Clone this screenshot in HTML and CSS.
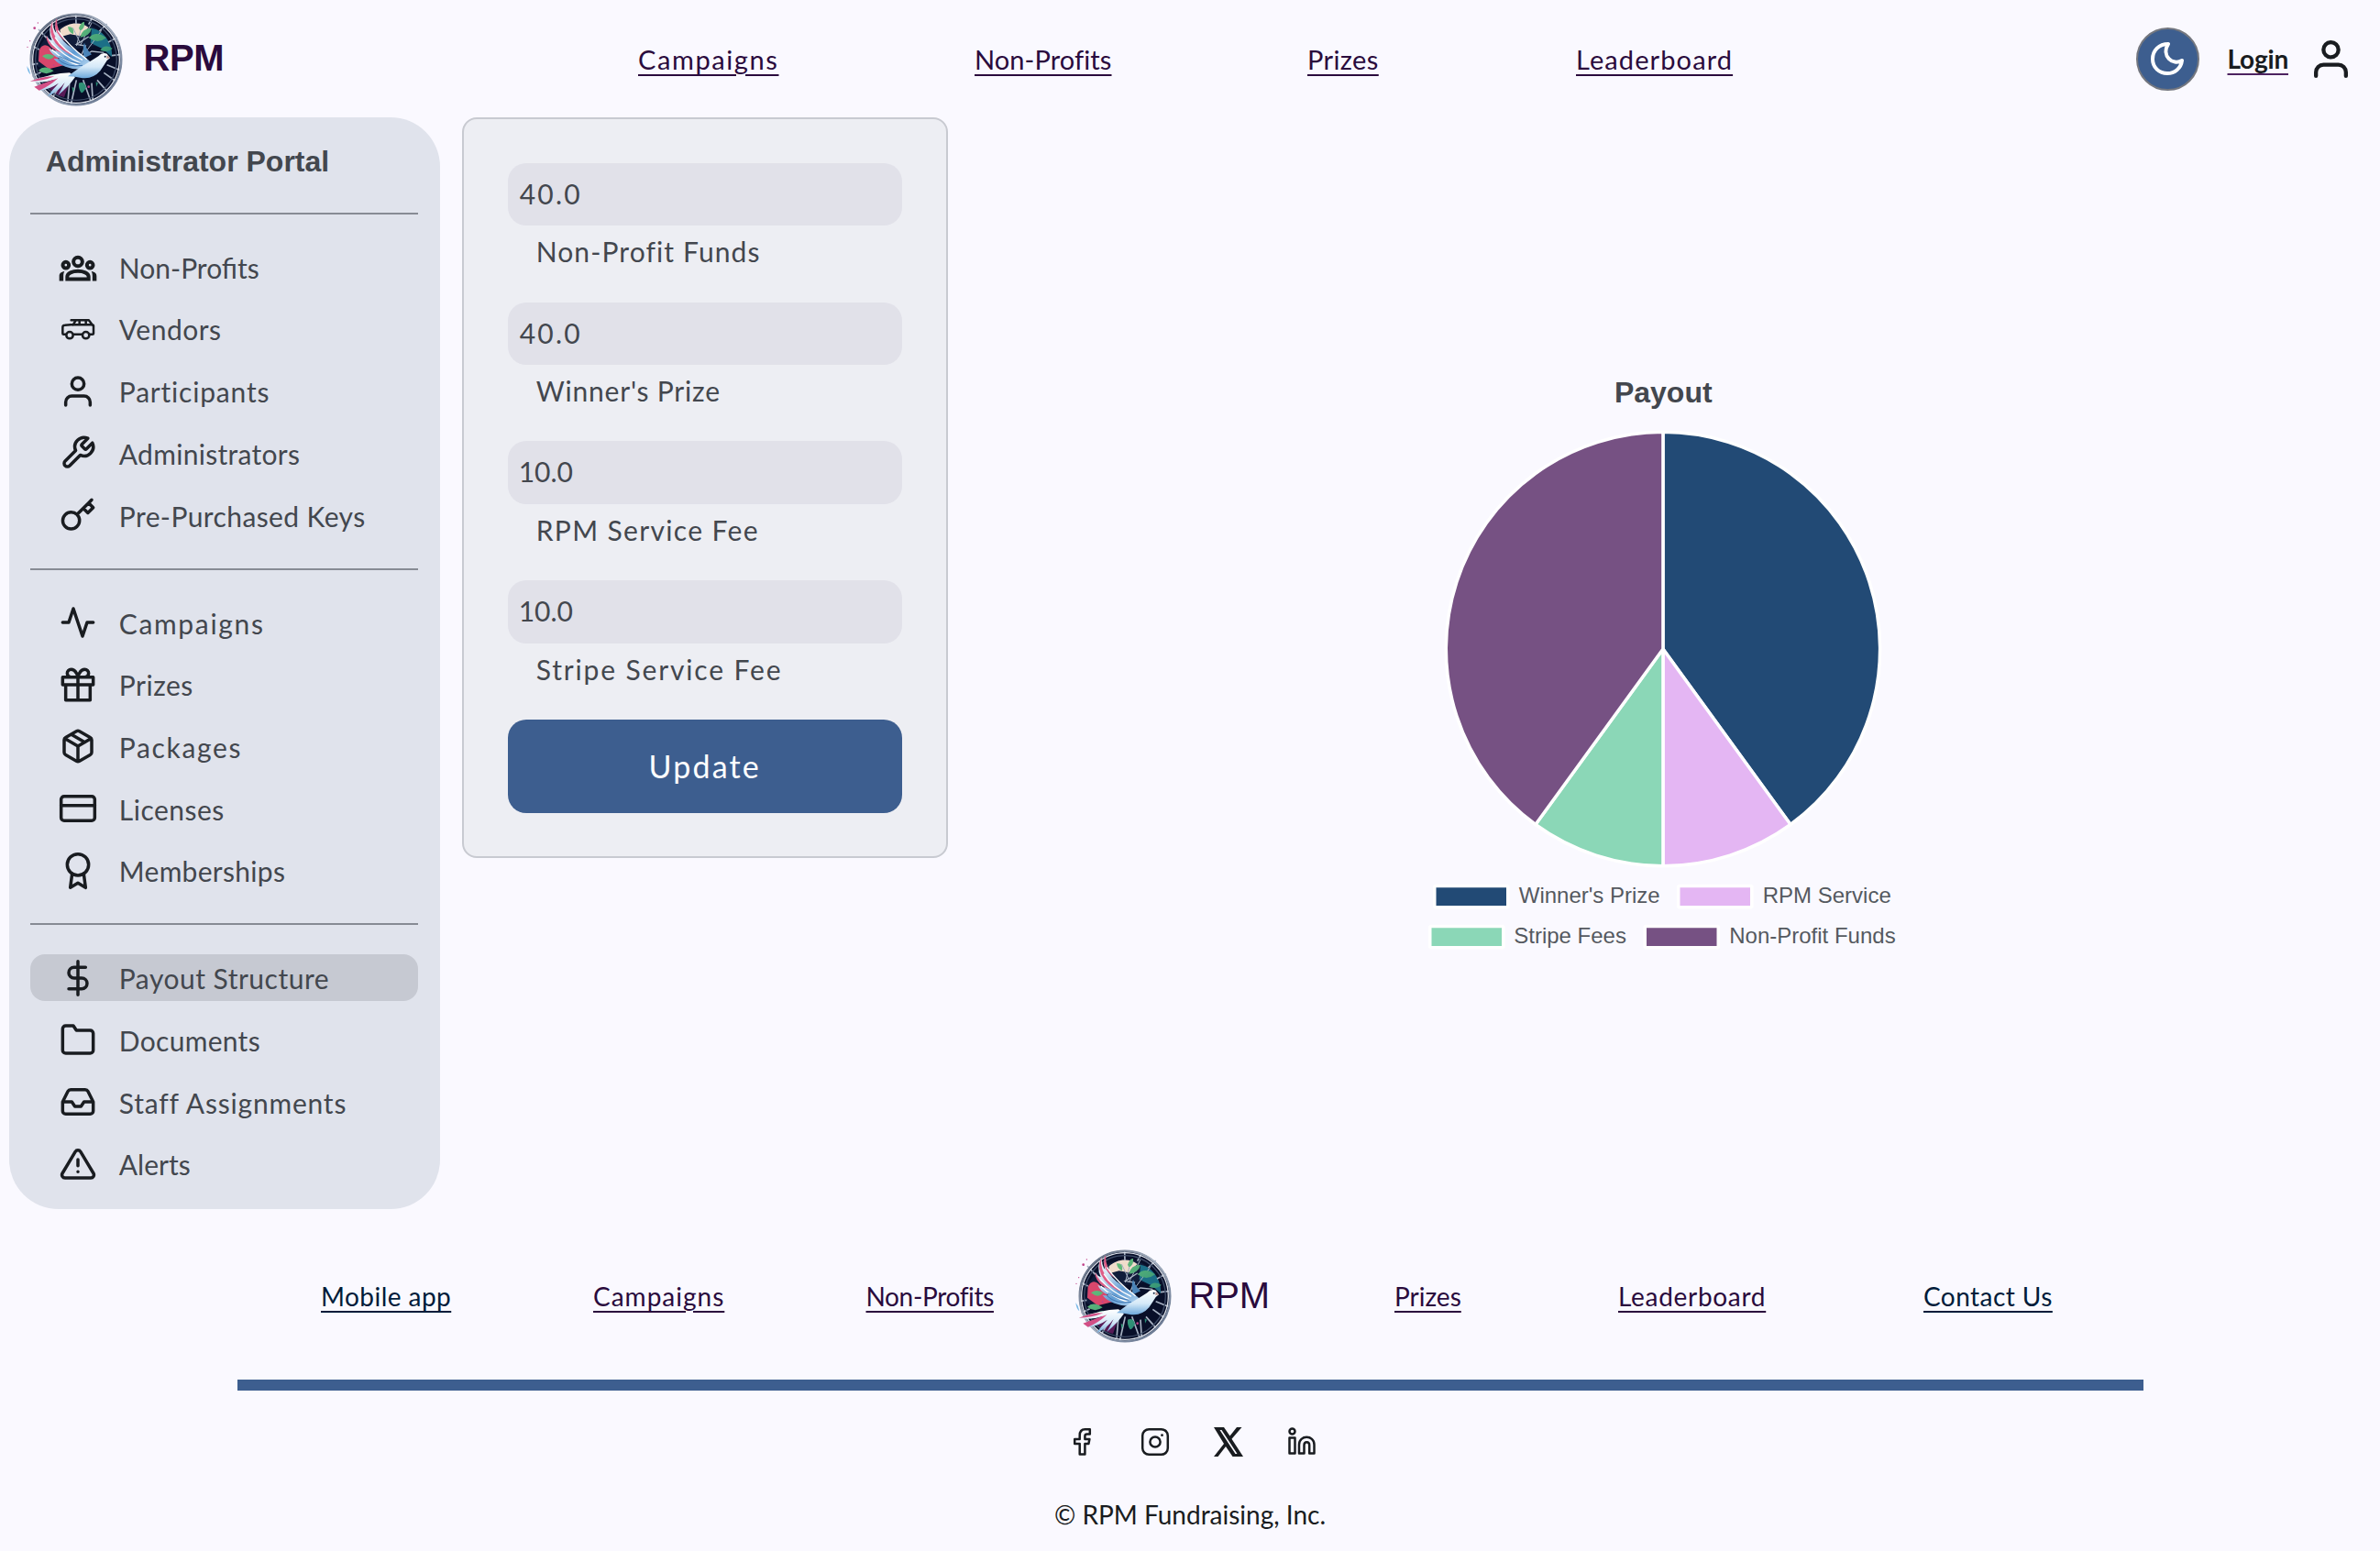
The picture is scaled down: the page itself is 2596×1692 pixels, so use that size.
FILE: index.html
```
<!DOCTYPE html>
<html lang="en">
<head>
<meta charset="utf-8">
<title>RPM - Payout Structure</title>
<link rel="stylesheet" href="styles.css">
</head>
<body>
<svg class="defs" aria-hidden="true">
  <defs>
    <linearGradient id="rim" x1="0" y1="0" x2="1" y2="1"><stop offset="0" stop-color="#4a566c"/><stop offset=".45" stop-color="#a9b4c4"/><stop offset="1" stop-color="#5a6a86"/></linearGradient>
    <linearGradient id="body" x1="0" y1="0" x2="0" y2="1"><stop offset="0" stop-color="#fff"/><stop offset=".55" stop-color="#d5e9f8"/><stop offset="1" stop-color="#6da9dc"/></linearGradient>
    <linearGradient id="wing" x1="0" y1="0" x2=".8" y2="1"><stop offset="0" stop-color="#fff"/><stop offset=".35" stop-color="#d6e6f5"/><stop offset=".7" stop-color="#5f9bd3"/><stop offset="1" stop-color="#a9cdec"/></linearGradient>
    <linearGradient id="leaf" x1="0" y1="0" x2="1" y2="1"><stop offset="0" stop-color="#7ed07c"/><stop offset="1" stop-color="#167c74"/></linearGradient>
    <clipPath id="disc"><circle cx="249" cy="195" r="146"/></clipPath>
    <symbol id="logo" viewBox="84 36 324 318">
      <circle cx="249" cy="195" r="150" fill="#080f29"/>
      <g clip-path="url(#disc)">
        <path d="M125 165C150 110 190 78 260 74C320 80 352 120 368 170L310 150L250 160L190 190L150 232L120 215Z" fill="#101c3a"/>
        <path d="M196 98C220 74 262 68 290 90L262 118L230 112L200 120Z" fill="#f0dccb"/>
        <path d="M128 165C140 138 160 140 190 190L208 214L160 226L126 200Z" fill="#d9476c"/>
        <path d="M300 92C345 100 370 150 366 186L336 160L296 140Z" fill="#1c6f87"/>
        <path d="M165 262L235 250L210 318C180 312 160 290 150 276Z" fill="#571a56"/>
        <path d="M290 120L250 145L280 150L262 190L300 168L340 172" fill="none" stroke="#aab5c4" stroke-width="4"/>
      </g>
      <g stroke="#a7b2c3" stroke-width="5" fill="none">
        <path d="M249 78L248 48M290 80L304 54M325 102L350 78M354 138L384 122M366 182L398 178M350 212L394 230M340 238L376 264M318 262L350 298M300 272L304 336M272 262L298 334M250 262L232 342M228 262L222 332M206 262L174 316M134 236L106 250M124 208L100 212M128 162L104 150M152 124L126 96"/>
        <path d="M300 75L262 150M332 100L282 168M238 90L262 140M270 76L250 150" stroke-width="3"/>
      </g>
      <circle cx="249" cy="195" r="133" fill="none" stroke="#3e4b66" stroke-width="4"/>
      <circle cx="249" cy="195" r="142" fill="none" stroke="#d9dee7" stroke-width="4"/>
      <circle cx="249" cy="195" r="148" fill="none" stroke="url(#rim)" stroke-width="7"/>
      <g fill="url(#leaf)">
        <path d="M222 88Q244 84 240 112Q224 106 222 88ZM258 92Q266 70 276 72Q278 96 262 100ZM262 122Q268 92 300 92Q294 118 262 122ZM290 124Q314 98 348 124Q320 146 290 124ZM328 164Q342 142 368 158Q354 174 328 164ZM138 184Q156 170 178 184Q162 204 138 184ZM126 230Q146 210 176 232Q150 250 126 230ZM150 258Q160 242 178 244Q172 262 150 258ZM258 272Q276 264 282 286Q274 304 266 304Q256 290 258 272ZM236 284l8 6l-6 12ZM314 268l7 4l-6 12Z"/>
      </g>
      <path d="M276 190Q268 160 276 140Q284 164 300 178Z" fill="#4a83b8"/>
      <path d="M228 238Q170 240 98 266Q140 274 178 260Q150 280 128 296Q160 294 192 272Q172 292 156 316Q190 300 212 270Q200 294 190 312Q224 284 246 252Z" fill="url(#body)"/>
      <path d="M98 266Q140 250 178 250Q140 266 98 266ZM112 284Q150 270 190 256Q160 284 128 296Z" fill="#d24f86"/>
      <path d="M186 60Q176 74 186 100Q204 140 240 160Q276 184 300 206L284 222Q250 232 214 218Q190 210 176 192Q190 194 196 192Q168 180 160 158Q176 168 184 166Q154 144 152 116Q160 130 170 132Q154 100 172 68Q174 96 184 108Q176 80 186 60Z" fill="url(#wing)"/>
      <path d="M172 68Q166 110 198 144Q222 168 246 184Q204 170 182 142Q154 104 172 68ZM152 116Q162 148 206 174Q172 166 158 142Q150 130 152 116ZM186 60Q184 104 218 138Q190 118 182 96Q178 76 186 60Z" fill="#df5c86"/>
      <path d="M180 122Q208 168 270 196M168 140Q206 182 262 206M170 162Q206 198 258 214M190 100Q224 150 284 194" fill="none" stroke="#fff" stroke-width="4"/>
      <path d="M190 194Q220 222 270 214M194 184Q226 204 262 208" fill="none" stroke="#3e76b2" stroke-width="3"/>
      <path d="M222 250Q250 228 270 216Q304 196 322 184Q334 170 350 176L360 190L350 198Q340 214 328 232Q302 262 262 254Q240 250 222 250Z" fill="url(#body)"/>
      <path d="M350 180L360 190L349 192Z" fill="#bd8f88"/><circle cx="344" cy="185" r="3" fill="#10203c"/>
      <path d="M88 216Q98 228 100 244Q90 236 88 216Z" fill="#76b8e6"/>
      <g fill="#c0428a"><circle cx="113" cy="92" r="4"/><circle cx="124" cy="75" r="2"/><circle cx="98" cy="134" r="2"/><circle cx="90" cy="154" r="2"/><circle cx="176" cy="214" r="3"/><circle cx="290" cy="284" r="4"/></g>
    </symbol>
    <symbol id="user" viewBox="0 0 24 24"><path d="M20 21v-2a4 4 0 0 0-4-4H8a4 4 0 0 0-4 4v2"/><circle cx="12" cy="7" r="4"/></symbol>
  </defs>
</svg>

<header class="header">
  <a class="brand"><svg class="logo"><use href="#logo"/></svg><strong>RPM</strong></a>
  <nav class="nav">
    <a class="campaigns">Campaigns</a>
    <a class="nonprofits">Non-Profits</a>
    <a class="prizes">Prizes</a>
    <a class="leaderboard">Leaderboard</a>
  </nav>
  <div class="account">
    <button class="theme"><svg viewBox="0 0 36 36"><path d="M19 2C9 2 2 9 2 18.500C2 27.500 9 34 18 34C26 34 33 28.500 34 20C24 26 11 15 19 2Z"/></svg></button>
    <a class="login">Login</a>
    <svg class="avatar icon"><use href="#user"/></svg>
  </div>
</header>

<main class="main">
  <aside class="sidebar">
    <h1>Administrator Portal</h1>
    <ul>
      <li><svg class="icon" viewBox="0 0 24 24"><g stroke-width="2.400"><circle cx="12" cy="8.700" r="2.900"/><circle cx="4.100" cy="10.900" r="2"/><circle cx="19.900" cy="10.900" r="2"/><path stroke-linejoin="miter" d="M5 20.100v-1.600c0-4.800 14-4.800 14 0v1.600z"/></g><path class="solid" d="M-.2 21.300v-3.200c0-1.700 1-2.700 3.400-3.100c-.6 1-.7 2-.7 3.200v3.100zM24.200 21.300v-3.200c0-1.700-1-2.700-3.400-3.100c.6 1 .7 2 .7 3.200v3.100z"/></svg><span>Non-Profits</span></li>
      <li><svg class="icon" viewBox="0 0 24 24"><g stroke-width="1.500"><path d="M4 15.500H2.600a.6.600 0 0 1-.6-.6v-4c0-.9.600-1.400 1.400-1.400l3.800-.3h14.200a.8.800 0 0 1 .8.800v4.800a.7.700 0 0 1-.7.700h-1.700M9.300 15.500h5.400M8.800 9.200L10.500 6.500M7.600 6.200h11.500l2.500 3.200M13 6.200v3M17.200 6.200v3"/><circle cx="6.600" cy="16" r="2.200"/><circle cx="17.200" cy="16" r="2.200"/></g></svg><span class="t5">Vendors</span></li>
      <li><svg class="icon"><use href="#user"/></svg><span class="t8">Participants</span></li>
      <li><svg class="icon" viewBox="0 0 24 24"><path d="M14.700 6.300a1 1 0 0 0 0 1.400l1.600 1.600a1 1 0 0 0 1.400 0l3.770-3.770a6 6 0 0 1-7.940 7.940l-6.910 6.910a2.120 2.120 0 0 1-3-3l6.910-6.910a6 6 0 0 1 7.940-7.940l-3.760 3.760z"/></svg><span class="t3">Administrators</span></li>
      <li><svg class="icon" viewBox="0 0 24 24"><path d="M21 2l-2 2m-7.610 7.610a5.500 5.500 0 1 1-7.778 7.778 5.500 5.500 0 0 1 7.777-7.777zm0 0L15.500 7.500m0 0l3 3L22 7l-3-3m-3.500 3.500L19 4"/></svg><span class="t4">Pre-Purchased Keys</span></li>
    </ul>
    <ul>
      <li><svg class="icon" viewBox="0 0 24 24"><path d="M22 12h-4l-3 9L9 3l-3 9H2"/></svg><span class="t16">Campaigns</span></li>
      <li><svg class="icon" viewBox="0 0 24 24"><path d="M20 12v10H4V12M2 7h20v5H2zM12 22V7M12 7H7.500a2.500 2.500 0 0 1 0-5C11 2 12 7 12 7zM12 7h4.500a2.500 2.500 0 0 0 0-5C13 2 12 7 12 7z"/></svg><span class="t5">Prizes</span></li>
      <li><svg class="icon" viewBox="0 0 24 24"><path d="M16.500 9.400l-9-5.190M21 16V8a2 2 0 0 0-1-1.730l-7-4a2 2 0 0 0-2 0l-7 4A2 2 0 0 0 3 8v8a2 2 0 0 0 1 1.730l7 4a2 2 0 0 0 2 0l7-4A2 2 0 0 0 21 16zM3.270 6.960L12 12.010l8.730-5.050M12 22.080V12"/></svg><span class="t16">Packages</span></li>
      <li><svg class="icon" viewBox="0 0 24 24"><rect x="1" y="4" width="22" height="16" rx="2"/><path d="M1 10h22"/></svg><span class="t5">Licenses</span></li>
      <li><svg class="icon" viewBox="0 0 24 24"><circle cx="12" cy="8" r="7"/><path d="M8.210 13.890L7 23l5-3 5 3-1.210-9.120"/></svg><span class="t3">Memberships</span></li>
    </ul>
    <ul>
      <li class="active"><svg class="icon" viewBox="0 0 24 24"><path d="M12 1v22M17 5H9.500a3.500 3.500 0 0 0 0 7h5a3.500 3.500 0 0 1 0 7H6"/></svg><span class="t5">Payout Structure</span></li>
      <li><svg class="icon" viewBox="0 0 24 24"><path d="M22 19a2 2 0 0 1-2 2H4a2 2 0 0 1-2-2V5a2 2 0 0 1 2-2h5l2 3h9a2 2 0 0 1 2 2z"/></svg><span class="t3">Documents</span></li>
      <li><svg class="icon" viewBox="0 0 24 24"><path d="M22 12h-6l-2 3h-4l-2-3H2M5.450 5.110L2 12v6a2 2 0 0 0 2 2h16a2 2 0 0 0 2-2v-6l-3.450-6.890A2 2 0 0 0 16.760 4H7.240a2 2 0 0 0-1.790 1.110z"/></svg><span class="t8">Staff Assignments</span></li>
      <li><svg class="icon" viewBox="0 0 24 24"><path d="M10.290 3.860L1.820 18a2 2 0 0 0 1.710 3h16.940a2 2 0 0 0 1.710-3L13.710 3.860a2 2 0 0 0-3.420 0zM12 9v4M12 17h.01"/></svg><span>Alerts</span></li>
    </ul>
  </aside>

  <form class="card">
    <div class="field"><div class="input wide">40.0</div><label class="t10">Non-Profit Funds</label></div>
    <div class="field"><div class="input wide">40.0</div><label class="t8">Winner's Prize</label></div>
    <div class="field"><div class="input">10.0</div><label class="t13">RPM Service Fee</label></div>
    <div class="field"><div class="input">10.0</div><label class="t18">Stripe Service Fee</label></div>
    <button type="button" class="update">Update</button>
  </form>

  <svg class="chart" viewBox="1034 128 1562 1191">
    <text class="chart-title" x="1814" y="438.500">Payout</text>
    <g stroke="#fff" stroke-width="3.500" stroke-linejoin="bevel">
      <path fill="#224a75" d="M1813.700 708V471.300A236.700 236.700 0 0 1 1952.800 899.500Z"/>
      <path fill="#e4b6f3" d="M1813.700 708L1952.800 899.500A236.700 236.700 0 0 1 1813.700 944.700Z"/>
      <path fill="#8bd7b7" d="M1813.700 708V944.700A236.700 236.700 0 0 1 1674.600 899.500Z"/>
      <path fill="#765183" d="M1813.700 708L1674.600 899.500A236.700 236.700 0 0 1 1813.700 471.300Z"/>
      <rect x="1564.500" y="966.500" width="80" height="23.300" fill="#224a75"/>
      <rect x="1830.500" y="966.500" width="80" height="23.300" fill="#e4b6f3"/>
      <rect x="1559.500" y="1010.500" width="80" height="23.300" fill="#8bd7b7"/>
      <rect x="1794" y="1010.500" width="80" height="23.300" fill="#765183"/>
    </g>
    <g class="legend">
      <text x="1656.500" y="985">Winner's Prize</text>
      <text x="1922.500" y="985">RPM Service</text>
      <text x="1651" y="1029">Stripe Fees</text>
      <text x="1886" y="1029">Non-Profit Funds</text>
    </g>
  </svg>
</main>

<footer class="footer">
  <nav class="footer-nav">
    <a class="mobile">Mobile app</a>
    <a class="campaigns">Campaigns</a>
    <a class="nonprofits">Non-Profits</a>
    <div class="brand"><svg class="logo"><use href="#logo"/></svg><span>RPM</span></div>
    <a class="prizes">Prizes</a>
    <a class="leaderboard">Leaderboard</a>
    <a class="contact">Contact Us</a>
  </nav>
  <div class="rule"></div>
  <div class="social">
    <svg viewBox="0 0 32 32"><path d="M19.500 2.200h5.300v5.200h-3.200c-1.700 0-2.200.8-2.200 2.200v3.400h5l-1 5h-4V29.500h-5.700V18H8.200v-5h5.500V9c0-4.300 2-6.800 5.800-6.800z"/></svg>
    <svg viewBox="0 0 32 32"><rect x="2.200" y="2.200" width="27.600" height="27.600" rx="7"/><circle cx="16" cy="16" r="5.600"/><circle class="dot" cx="23.500" cy="8.700" r="1.400"/></svg>
    <svg viewBox="0 0 32 32"><path class="dot" fill-rule="evenodd" d="M0 0H11L17.500 9.500L25 0H30.500L19.500 12.800L32 32H20.500L13 21L4.500 32H0L11 18ZM6.500 3L23.500 29H25.500L8.500 3Z"/></svg>
    <svg viewBox="0 0 32 32"><circle cx="5.500" cy="4.600" r="3"/><path d="M2.500 11.500h6v17h-6zM13 28.500V19c0-11 16.500-11 16.500 0v9.500h-5.300V19.500c0-4.500-5.700-4.500-5.700 0v9z"/></svg>
  </div>
  <p>© RPM Fundraising, Inc.</p>
</footer>
</body>
</html>
```
FILE: styles.css
```
* { box-sizing: border-box; }
body {
  margin: 0;
  background: #faf9ff;
  color: #191c20;
  font-family: Lato, "Open Sans", sans-serif;
}
ul, h1, p { margin: 0; padding: 0; }
.defs { display: block; width: 0; height: 0; }

.icon {
  width: 40px;
  height: 40px;
  flex: none;
  fill: none;
  stroke: #191c20;
  stroke-width: 2.1;
  stroke-linecap: round;
  stroke-linejoin: round;
  overflow: visible;
}
.solid { fill: #191c20; stroke: none; }

/* Header */
.header {
  display: grid;
  grid-template-columns: 696px 1633.500px 1fr;
  align-items: center;
  height: 128px;
}
.brand {
  display: flex;
  align-items: center;
  color: #2a0b3d;
  font: 40px/46px "Liberation Sans", Arial, sans-serif;
}
.header .brand { gap: 20.500px; padding: 2px 0 0 28px; }
.header .brand strong { padding-bottom: 5px; letter-spacing: -.4px; }
.logo { width: 108px; height: 106px; flex: none; }
.nav { display: grid; grid-template-columns: 367px 363px 293px 1fr; }
.nav a, .footer-nav > a, .login {
  justify-self: start;
  color: #2a0b3d;
  text-decoration: underline;
  text-decoration-thickness: 2px;
  text-underline-offset: 5px;
  white-space: nowrap;
}
.nav a { font-size: 29px; }
.nav .campaigns { letter-spacing: 1.6px; }
.nav .nonprofits { letter-spacing: .1px; }
.nav .prizes { letter-spacing: .4px; }
.nav .leaderboard { letter-spacing: 1.1px; }
.account { display: flex; align-items: center; }
.theme {
  display: grid;
  place-items: center;
  width: 69px;
  height: 69px;
  padding: 0;
  border: 2px solid #74777f;
  border-radius: 50%;
  background: #3d5e8f;
}
.theme svg { width: 36px; height: 36px; fill: none; stroke: #fff; stroke-width: 4; stroke-linejoin: round; }
.login {
  margin-left: 31px;
  width: 67px;
  color: #191c20;
  font-size: 28px;
  font-weight: 700;
  letter-spacing: -.2px;
  text-decoration-color: #4d2360;
}
.avatar { width: 49px; height: 49px; margin-left: 21.500px; }

/* Main */
.main { display: flex; align-items: flex-start; }
.sidebar {
  flex: none;
  width: 470.500px;
  height: 1191px;
  margin-left: 9.500px;
  padding: 28px 24px 0 23.800px;
  border-radius: 54px;
  background: #e0e3ec;
  color: #43474e;
}
.sidebar h1 {
  height: 76px;
  padding-left: 16.500px;
  font: bold 32px/40px "Liberation Sans", Arial, sans-serif;
}
.sidebar ul {
  display: flex;
  flex-direction: column;
  gap: 16.700px;
  padding: 31.800px 0 32.200px;
  border-top: 2px solid #878b94;
  list-style: none;
}
.sidebar li {
  display: flex;
  align-items: center;
  gap: 24.500px;
  height: 51px;
  padding-left: 32px;
  border-radius: 16px;
  font-size: 30px;
  letter-spacing: 0;
}
.sidebar .active { background: #c6c9d2; }
.sidebar li span { padding-top: 1px; }
.t3 { letter-spacing: .3px; }
.t4 { letter-spacing: .4px; }
.t5 { letter-spacing: .5px; }
.t8 { letter-spacing: .8px; }
.t10 { letter-spacing: 1.1px; }
.t13 { letter-spacing: 1.35px; }
.t16 { letter-spacing: 1.65px; }
.t18 { letter-spacing: 1.85px; }

.card {
  flex: none;
  width: 529.500px;
  height: 808px;
  margin-left: 24px;
  padding: 47.700px;
  border: 2px solid #c8cad1;
  border-radius: 16px;
  background: #edeef3;
  color: #43474e;
  font-size: 30px;
}
.field { height: 151.900px; }
.input {
  height: 68.600px;
  padding: 15px 12px;
  border-radius: 20px;
  background: #e1e1e9;
  line-height: 36px;
}
.input.wide { padding-left: 13px; letter-spacing: 2.200px; }
.field label { display: block; padding: 10px 0 0 31px; line-height: 36px; }
.update {
  display: block;
  width: 100%;
  height: 101.500px;
  padding: 0 0 2px;
  border: 0;
  border-radius: 20px;
  background: #3d5e8f;
  color: #fff;
  font: 34px Lato, sans-serif;
  letter-spacing: 2.200px;
}

.chart { flex: 1; height: 1191px; font-family: "Liberation Sans", Arial, sans-serif; }
.chart-title { font-size: 32px; font-weight: 700; fill: #43474e; text-anchor: middle; }
.legend { font-size: 24px; fill: #55595f; }

/* Footer */
.footer { padding-top: 41.500px; }
.footer-nav {
  display: grid;
  grid-template-columns: 297px 297.500px 227px 349.500px 244px 333px 1fr;
  align-items: center;
  height: 106px;
  padding-left: 350px;
  font-size: 28px;
}
.footer-nav .brand { gap: 17px; }
.footer-nav .brand span { padding-bottom: 2px; letter-spacing: -.2px; }
.footer-nav .mobile { color: #001c3a; letter-spacing: .45px; }
.footer-nav .campaigns { letter-spacing: 1px; }
.footer-nav .nonprofits { letter-spacing: -.35px; }
.footer-nav .leaderboard { letter-spacing: .7px; }
.footer-nav .contact { color: #001c3a; letter-spacing: .45px; }
.rule { height: 11.500px; margin: 38.500px 258.500px 0 259px; background: #3d5e8f; }
.social { display: flex; justify-content: center; gap: 48px; margin-top: 40px; padding-left: 3px; }
.social svg { width: 32px; height: 32px; fill: none; stroke: #191c20; stroke-width: 2.500; stroke-linejoin: round; }
.social .dot { fill: #191c20; stroke: none; }
.footer p { margin-top: 46px; font-size: 28px; line-height: 34px; text-align: center; }
```
